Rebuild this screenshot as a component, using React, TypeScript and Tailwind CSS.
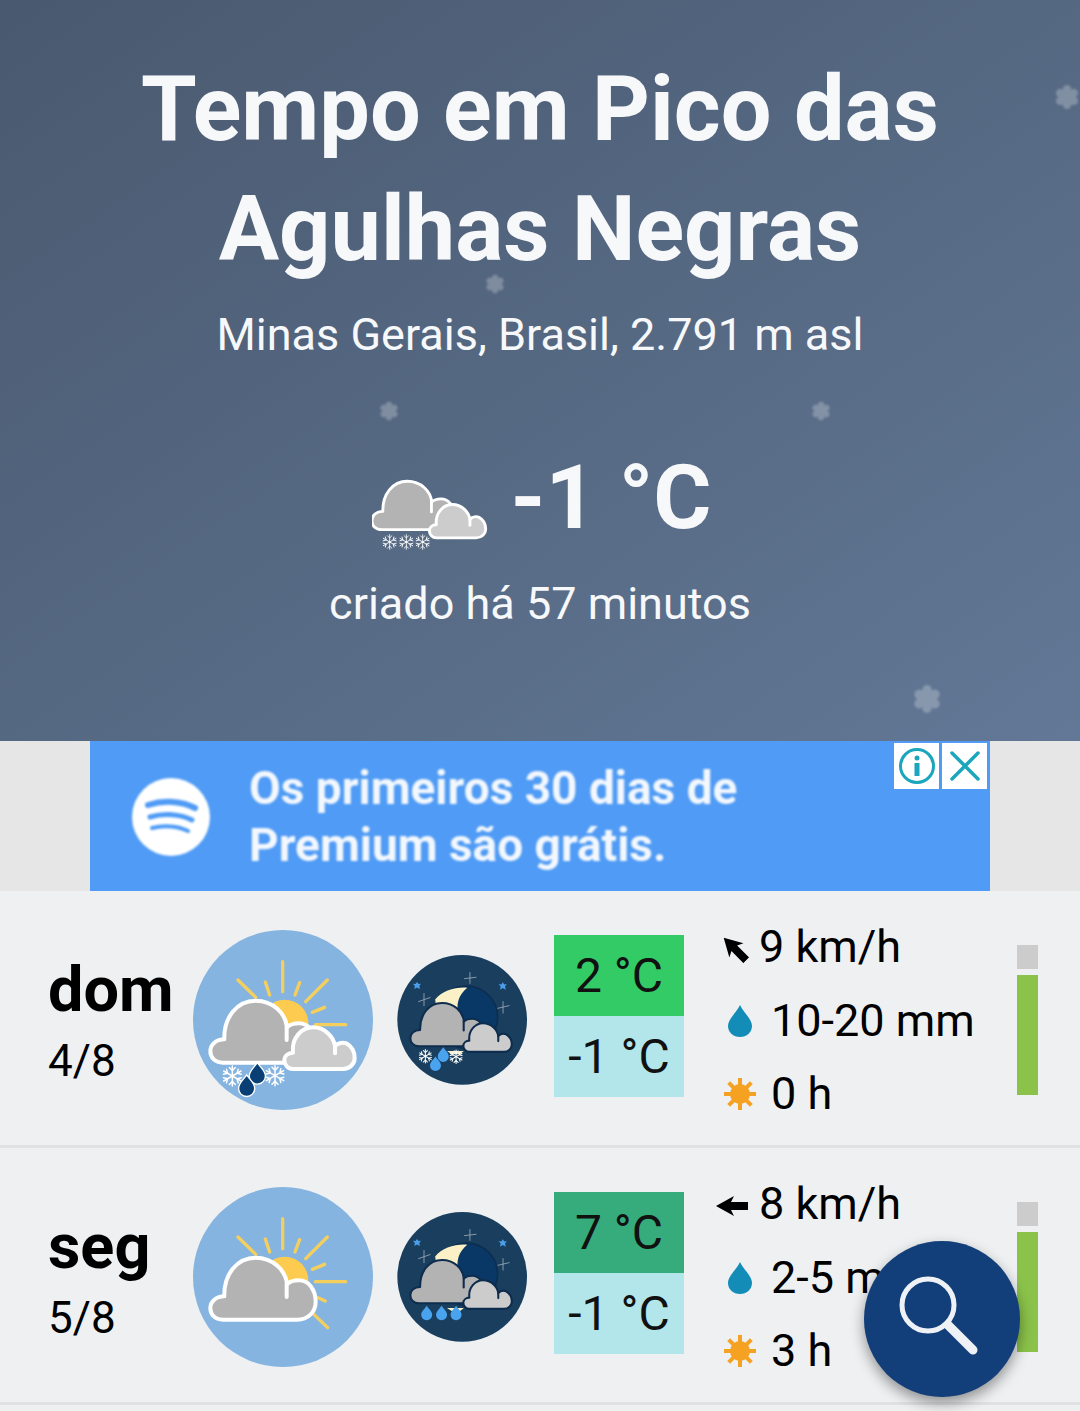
const font = "font-['Roboto',sans-serif]"

const BIG_CLOUD = "M130 428 C105 428 92 412 92 393 C92 373 110 358 134 358 C132 292 172 242 228 242 C280 242 318 280 322 322 C332 312 345 310 358 310 C385 310 408 335 408 375 C408 405 385 428 352 428 Z"
const SMALL_CLOUD = "M340 447 C325 447 314 434 314 421 C314 408 325 398 340 398 C335 355 365 322 400 322 C435 322 462 350 466 378 C475 368 490 366 500 370 C515 378 525 395 525 415 C525 432 510 447 490 447 Z"

const BigCloud = ({ stroke, width = 12, fill = "#b3b3b3" }: { stroke: string; width?: number; fill?: string }) => (
    <>
        <path d={BIG_CLOUD} fill={fill} stroke={stroke} strokeWidth={width} strokeLinejoin="round" />
        <path d="M321 322 V360" fill="none" stroke={stroke} strokeWidth={width} strokeLinecap="round" />
    </>
)

const SmallCloud = ({ stroke, width = 12 }: { stroke: string; width?: number }) => (
    <>
        <path d={SMALL_CLOUD} fill="#cccccc" stroke={stroke} strokeWidth={width} strokeLinejoin="round" />
        <path d="M466 378 V400" fill="none" stroke={stroke} strokeWidth={width} strokeLinecap="round" />
    </>
)

const SnowGlyph = ({ x, y, r, width = 3, color = "#ffffff" }: { x: number; y: number; r: number; width?: number; color?: string }) => (
    <g transform={`translate(${x} ${y})`} stroke={color} strokeWidth={width} strokeLinecap="round" fill="none">
        {[0, 60, 120, 180, 240, 300].map((a) => (
            <g key={a} transform={`rotate(${a})`}>
                <path d={`M0 0 V${-r}`} />
                <path d={`M${-r * 0.3} ${-r * 0.85} L0 ${-r * 0.55} L${r * 0.3} ${-r * 0.85}`} />
            </g>
        ))}
    </g>
)

const Drop = ({ x, y, s, fill, stroke }: { x: number; y: number; s: number; fill: string; stroke?: string }) => (
    <path
        transform={`translate(${x} ${y}) scale(${s})`}
        d="M0 -24 C6 -14 18 -6 18 6 C18 16 10 24 0 24 C-10 24 -18 16 -18 6 C-18 -6 -6 -14 0 -24 Z"
        fill={fill}
        stroke={stroke}
        strokeWidth={stroke ? 3 : 0}
    />
)

const Sun = ({ lowRays }: { lowRays?: boolean }) => (
    <>
        <g stroke="#f5cf5e" strokeWidth="10" strokeLinecap="round">
            <path d="M309 125 V215" />
            <path d="M257 186 L270 225" />
            <path d="M175 180 L228 232" />
            <path d="M360 188 L346 225" />
            <path d="M443 180 L378 245" />
            <path d="M435 262 L398 277" />
            <path d="M407 314 H498" />
            {lowRays && <path d="M415 362 L437 372" />}
            {lowRays && <path d="M400 410 L444 452" />}
        </g>
        <circle cx="315" cy="310" r="71" fill="#fdcb4f" />
    </>
)

const DayIcon = ({ snowy }: { snowy?: boolean }) => (
    <svg className="w-[180px] h-[180px] shrink-0" viewBox="40 30 540 540">
        <circle cx="310" cy="300" r="270" fill="#85b4e0" />
        <Sun lowRays={!snowy} />
        <BigCloud stroke="#ffffff" />
        {snowy && (
            <>
                <SmallCloud stroke="#ffffff" />
                <SnowGlyph x={158} y={468} r={30} width={4.500} />
                <SnowGlyph x={286} y={467} r={30} width={4.500} />
                <Drop x={233} y={460} s={1.350} fill="#0a3f75" stroke="#ffffff" />
                <Drop x={201} y={497} s={1.350} fill="#0a3f75" stroke="#ffffff" />
            </>
        )}
    </svg>
)

const NightIcon = ({ snowy }: { snowy?: boolean }) => (
    <svg className="w-[130px] h-[130px] shrink-0" viewBox="652 108 385 385">
        <circle cx="845" cy="300" r="192" fill="#1a3f5e" />
        <g stroke="#9aa9b5" strokeWidth="2.500" strokeLinecap="round">
            <path d="M868 160 V192 M852 178 L886 174" />
            <path d="M732 222 V258 M716 246 L750 234" />
            <path d="M966 246 V280 M950 266 L984 258" />
        </g>
        <g fill="#4a9eea">
            <path d="M711 188 L716 194 L723 193 L718 200 L720 209 L711 204 L703 209 L705 200 L699 193 L707 194 Z" />
            <path d="M965 189 L970 195 L977 194 L972 201 L974 211 L965 206 L957 211 L959 201 L953 194 L961 195 Z" />
        </g>
        <circle cx="858" cy="292" r="92" fill="#093867" stroke="#0c2e50" strokeWidth="5" />
        <path d="M765 240 C785 215 825 202 860 205 C835 225 825 255 835 285 L770 275 Z" fill="#fbf0c6" />
        <path d="M800 392 H850 L838 402 H815 Z" fill="#fbf0c6" />
        <g transform="translate(628 83) scale(0.69)">
            <BigCloud stroke="#0e2c4d" width={9} />
        </g>
        <g transform="translate(635 91) scale(0.68)">
            <SmallCloud stroke="#0e2c4d" width={9} />
        </g>
        {snowy ? (
            <>
                <SnowGlyph x={736} y={408} r={20} width={3} />
                <SnowGlyph x={827} y={409} r={20} width={3} />
                <Drop x={789} y={403} s={0.900} fill="#4aa3ef" />
                <Drop x={766} y={430} s={0.900} fill="#4aa3ef" />
            </>
        ) : (
            <>
                <Drop x={740} y={407} s={0.900} fill="#4aa3ef" />
                <Drop x={784} y={407} s={0.900} fill="#4aa3ef" />
                <Drop x={827} y={407} s={0.900} fill="#4aa3ef" />
            </>
        )}
    </svg>
)

const HeaderIcon = () => (
    <svg className="translate-x-1 translate-y-5 w-[116px] h-[80px]" viewBox="40 80 348 240">
        <g transform="translate(-32 -99) scale(0.78)">
            <BigCloud stroke="#ffffff" width={11} />
        </g>
        <g transform="translate(-39 -98) scale(0.8)">
            <SmallCloud stroke="#ffffff" width={11} />
        </g>
        <SnowGlyph x={93} y={272} r={22} width={2.500} />
        <SnowGlyph x={143} y={272} r={22} width={2.500} />
        <SnowGlyph x={192} y={272} r={22} width={2.500} />
    </svg>
)

const Flake = ({ className }: { className: string }) => (
    <svg className={`absolute opacity-25 blur-[1px] ${className}`} viewBox="-14 -14 28 28">
        <g fill="#ffffff">
            {[0, 60, 120, 180, 240, 300].map((a) => (
                <circle key={a} cx="0" cy="-8.500" r="4.500" transform={`rotate(${a})`} />
            ))}
            <circle cx="0" cy="0" r="6" />
        </g>
    </svg>
)

const WindArrow = ({ className }: { className?: string }) => (
    <svg className={`w-[32px] h-[24px] ${className ?? ""}`} viewBox="0 0 32 24">
        <path d="M0 12 L18 2 L15 8 H32 V16 H15 L18 22 Z" fill="#000000" />
    </svg>
)

const DropIcon = () => (
    <svg className="w-[24px] h-[32px]" viewBox="0 0 24 32">
        <path d="M12 0 C15 7 24 14 24 21 C24 27.500 18.500 32 12 32 C5.500 32 0 27.500 0 21 C0 14 9 7 12 0 Z" fill="#138db8" />
    </svg>
)

const SunIcon = () => (
    <svg className="w-[32px] h-[32px]" viewBox="-16 -16 32 32">
        <circle r="10" fill="#f5a122" />
        <g stroke="#f5a122" strokeWidth="4">
            {[0, 45, 90, 135, 180, 225, 270, 315].map((a) => (
                <path key={a} d="M0 -8 V-16" transform={`rotate(${a})`} />
            ))}
        </g>
    </svg>
)

interface DayRow {
    day: string
    date: string
    snowyDay: boolean
    snowyNight: boolean
    high: string
    highBg: string
    low: string
    wind: string
    windClass: string
    rain: string
    sun: string
}

const rows: DayRow[] = [
    { day: "dom", date: "4/8", snowyDay: true, snowyNight: true, high: "2 °C", highBg: "bg-[#33cb66]", low: "-1 °C", wind: "9 km/h", windClass: "rotate-45 translate-x-[3px] translate-y-[2px]", rain: "10-20 mm", sun: "0 h" },
    { day: "seg", date: "5/8", snowyDay: false, snowyNight: false, high: "7 °C", highBg: "bg-[#36ac7d]", low: "-1 °C", wind: "8 km/h", windClass: "translate-y-[2px]", rain: "2-5 mm", sun: "3 h" },
]

const ForecastRow = ({ row }: { row: DayRow }) => (
    <div className="flex h-[257px] items-center border-b-[3px] border-[#dfe1e2] pl-12 pt-[3px]">
        <div className="mt-[13px] w-[145px] shrink-0 text-black">
            <div className="text-[63px] font-bold leading-[70px]">{row.day}</div>
            <div className="text-[44px] leading-[72px]">{row.date}</div>
        </div>
        <DayIcon snowy={row.snowyDay} />
        <div className="ml-6">
            <NightIcon snowy={row.snowyNight} />
        </div>
        <div className="ml-[27px] w-[130px] shrink-0 -mt-2 text-center text-[48px] leading-[81px] text-[#111111]">
            <div className={row.highBg}>{row.high}</div>
            <div className="bg-[#b2e6ea]">{row.low}</div>
        </div>
        <div className="ml-8 mt-[2px] w-[301px] shrink-0 text-[45px] leading-[73.500px] text-black">
            <div className="flex items-center">
                <div className="flex w-[43px] justify-start">
                    <WindArrow className={row.windClass} />
                </div>
                <span>{row.wind}</span>
            </div>
            <div className="flex items-center">
                <div className="flex w-[55px] justify-start pl-3">
                    <DropIcon />
                </div>
                <span>{row.rain}</span>
            </div>
            <div className="flex items-center">
                <div className="flex w-[55px] justify-start pl-2">
                    <SunIcon />
                </div>
                <span>{row.sun}</span>
            </div>
        </div>
        <div className="flex w-[21px] shrink-0 flex-col gap-1.5">
            <div className="h-6 bg-[#cccccc]" />
            <div className="h-[120px] bg-[#8bc34a]" />
        </div>
    </div>
)

const App = () => {
    return (
        <div className={`relative h-[1411px] w-[1080px] overflow-hidden bg-[#eef0f2] ${font}`}>
            <header className="relative h-[741px] bg-gradient-to-br from-[#49596f] to-[#627896] pt-[50px] text-center text-[#f7f8fa]">
                <Flake className="left-[1054px] top-[84px] w-[26px] h-[26px]" />
                <Flake className="left-[485px] top-[274px] w-[20px] h-[20px]" />
                <Flake className="left-[379px] top-[401px] w-[20px] h-[20px]" />
                <Flake className="left-[811px] top-[401px] w-[20px] h-[20px]" />
                <Flake className="left-[912px] top-[684px] w-[30px] h-[30px]" />
                <h1 className="text-[90px] font-bold leading-[120px]">
                    Tempo em Pico das
                    <br />
                    Agulhas Negras
                </h1>
                <p className="mt-[15px] text-[45px] leading-[60px]">Minas Gerais, Brasil, 2.791 m asl</p>
                <div className="mt-[83px] flex items-center justify-center gap-[26px]">
                    <HeaderIcon />
                    <span className="text-[89px] font-bold leading-[100px]">-1 °C</span>
                </div>
                <p className="mt-[26px] text-[45px] leading-[60px]">criado há 57 minutos</p>
            </header>

            <div className="flex h-[150px] justify-center bg-[#e6e6e6]">
                <div className="relative flex w-[900px] items-center bg-[#4f9bf5] pl-[42px]">
                    <div className="mt-[2px] flex items-center blur-[1px]">
                        <svg className="h-[78px] w-[78px]" viewBox="0 0 78 78">
                            <circle cx="39" cy="39" r="39" fill="#ffffff" />
                            <g fill="none" stroke="#4f9bf5" strokeLinecap="round">
                                <path d="M16 27 C32 22 50 23 63 30" strokeWidth="6" />
                                <path d="M18 39 C32 35 48 36 60 42" strokeWidth="5" />
                                <path d="M20 50 C32 47 46 48 56 53" strokeWidth="4" />
                            </g>
                        </svg>
                        <div className="ml-[39px] text-[46px] font-bold leading-[57px] text-[#f4f8fe]">
                            Os primeiros 30 dias de
                            <br />
                            Premium são grátis.
                        </div>
                    </div>
                    <div className="absolute right-[3px] top-[2px] flex gap-[3px]">
                        <div className="flex h-[46px] w-[45px] items-center justify-center bg-white">
                            <svg className="h-9 w-9" viewBox="0 0 36 36">
                                <circle cx="18" cy="18" r="16.500" fill="none" stroke="#1ba6bd" strokeWidth="3" />
                                <circle cx="18" cy="10" r="2.500" fill="#1ba6bd" />
                                <rect x="15.500" y="15" width="5" height="13" fill="#1ba6bd" />
                            </svg>
                        </div>
                        <div className="flex h-[46px] w-[45px] items-center justify-center bg-white">
                            <svg className="h-9 w-9" viewBox="0 0 36 36">
                                <path d="M5 5 L31 31 M31 5 L5 31" stroke="#1ba6bd" strokeWidth="3.500" strokeLinecap="round" />
                            </svg>
                        </div>
                    </div>
                </div>
            </div>

            {rows.map((row) => (
                <ForecastRow key={row.day} row={row} />
            ))}

            <button className="absolute left-[864px] top-[1241px] flex h-[156px] w-[156px] items-center justify-center rounded-full bg-[#123f79] shadow-[0_6px_14px_rgba(0,0,0,0.4)]">
                <svg className="h-[156px] w-[156px]" viewBox="0 0 156 156">
                    <circle cx="64" cy="64" r="26" fill="none" stroke="#eef2f6" strokeWidth="5" />
                    <path d="M84 84 L109 109" stroke="#eef2f6" strokeWidth="9" strokeLinecap="round" />
                </svg>
            </button>
        </div>
    )
}

export default App
